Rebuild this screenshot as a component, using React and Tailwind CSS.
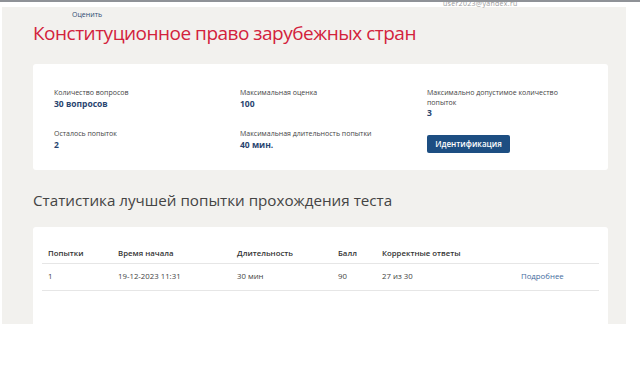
export default function App() {
  const font = { fontFamily: '"Open Sans", "Noto Sans", sans-serif' };
  const label = "text-[7px] leading-[9.5px] text-[#444]";
  const value = "text-[8.5px] leading-[11px] font-bold text-[#29446f]";
  return (
    <div className="w-[640px] h-[384px] bg-white relative overflow-hidden" style={font}>
      <div className="absolute left-[443px] top-[0px] text-[7px] leading-[8px] text-[#9a9a9a] tracking-[0.3px]">
        user2023@yandex.ru
      </div>
      <div className="relative h-[2px] bg-[#8f9297]" />
      <div className="ml-[2px] mt-[5px] w-[624px] h-[317px] bg-[#f2f1ee] pl-[31px] pr-[18px] pt-[4px]">
        <div className="pl-[39px] text-[7px] leading-[7px] text-[#2c4a72]">Оценить</div>
        <h1 className="mt-[2px] text-[19px] leading-[26px] text-[#d3223c] font-normal tracking-[-0.5px]">
          Конституционное право зарубежных стран
        </h1>
        <div className="mt-[18px] bg-white rounded-[3px] pl-[21px] pt-[24px] pb-[23px]">
          <div className="grid grid-cols-[186px_187px_1fr] h-[41px]">
            <div>
              <div className={label}>Количество вопросов</div>
              <div className={value}>30 вопросов</div>
            </div>
            <div>
              <div className={label}>Максимальная оценка</div>
              <div className={value}>100</div>
            </div>
            <div>
              <div className={label + " w-[150px] leading-[8.5px]"}>Максимально допустимое количество попыток</div>
              <div className={value}>3</div>
            </div>
          </div>
          <div className="grid grid-cols-[186px_187px_1fr] h-[18px]">
            <div>
              <div className={label}>Осталось попыток</div>
              <div className={value}>2</div>
            </div>
            <div>
              <div className={label}>Максимальная длительность попытки</div>
              <div className={value}>40 мин.</div>
            </div>
            <div>
              <button className="w-[83px] h-[18px] rounded-[2px] bg-[#1d4e82] text-white text-[8px] font-semibold leading-[18px]">
                Идентификация
              </button>
            </div>
          </div>
        </div>
        <h2 className="mt-[20px] text-[15.2px] leading-[20px] text-[#444] font-normal">
          Статистика лучшей попытки прохождения теста
        </h2>
        <div className="mt-[17px] bg-white rounded-t-[3px] px-[9px] pt-[17px] h-[98px]">
          <div className="grid grid-cols-[70px_119px_101px_44px_139px_1fr] pl-[6px] h-[20px] items-center border-b border-[#e6e6e6] text-[7.8px] font-semibold text-[#333]">
            <div>Попытки</div>
            <div>Время начала</div>
            <div>Длительность</div>
            <div>Балл</div>
            <div>Корректные ответы</div>
            <div></div>
          </div>
          <div className="grid grid-cols-[70px_119px_101px_44px_139px_1fr] pl-[6px] h-[27px] items-center border-b border-[#e6e6e6] text-[7.8px] text-[#444]">
            <div>1</div>
            <div>19-12-2023 11:31</div>
            <div>30 мин</div>
            <div>90</div>
            <div>27 из 30</div>
            <div className="text-[#3f6b9e]">Подробнее</div>
          </div>
        </div>
      </div>
    </div>
  );
}
